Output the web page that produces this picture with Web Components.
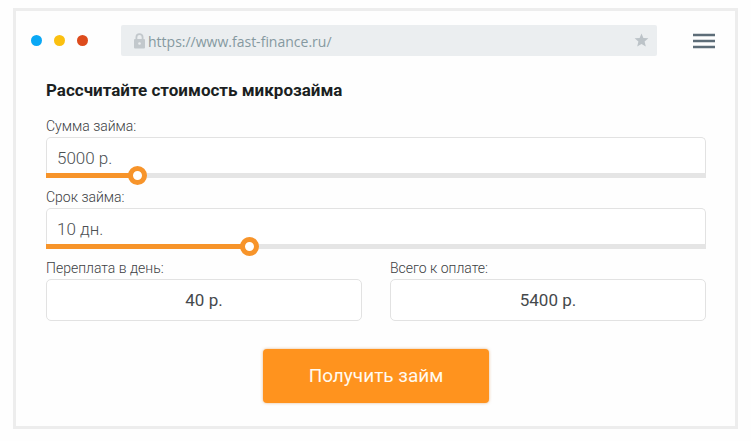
<!DOCTYPE html>
<html lang="ru">
<head>
<meta charset="utf-8">
<meta name="viewport" content="width=device-width, initial-scale=1">
<title>Fast Finance</title>
<style>
body { margin: 0; padding: 8px 13px 12px; background: #fefefe; font-family: Roboto, "Liberation Sans", sans-serif; color: #3c4043; }
</style>
</head>
<body>
<browser-window url="https://www.fast-finance.ru/">
  <loan-calculator></loan-calculator>
</browser-window>

<template id="window-template">
  <style>
    :host { display: block; border: 3px solid #ededed; background: #fefefe; }
    header { display: flex; align-items: center; padding: 14px 20px 0 15px; }
    .dots { display: flex; gap: 12px; flex: none; }
    .dots i { width: 11px; height: 11px; border-radius: 50%; }
    .dots i:nth-child(1) { background: #0aa8f5; }
    .dots i:nth-child(2) { background: #fbc010; }
    .dots i:nth-child(3) { background: #dd4b1c; }
    .address { display: flex; align-items: center; flex: 1; min-width: 0; height: 31px; margin-left: 33px; padding: 0 8px 0 12px; box-sizing: border-box; border-radius: 2px; background: #ebeef0; }
    .address input { flex: 1; min-width: 0; height: 31px; padding: 2px 0 0 2px; border: 0; box-sizing: border-box; background: none; color: #8599a0; font: 14px/20px "Open Sans", "Noto Sans", sans-serif; outline: none; }
    svg { display: block; flex: none; }
    button { padding: 0; border: 0; background: none; cursor: pointer; }
    .menu { margin-left: 36px; }
  </style>
  <header>
    <div class="dots"><i></i><i></i><i></i></div>
    <div class="address">
      <svg width="13" height="16" viewBox="0 0 13 16" aria-hidden="true"><path d="M3.4 7V4.2a3.1 3.1 0 0 1 6.2 0V7" fill="none" stroke="#c2c8cc" stroke-width="1.8"/><rect x="1" y="6" width="11" height="9.5" rx="1" fill="#c2c8cc"/><circle cx="6.5" cy="10.5" r="1.3" fill="#ebeef0"/></svg>
      <input type="text" aria-label="Адрес" spellcheck="false">
      <button type="button" aria-label="В закладки"><svg width="15" height="15" viewBox="0 0 15 15"><path d="M7.5 .4 9.4 5 14.4 5.3 10.6 8.6 11.8 13.6 7.5 10.9 3.2 13.6 4.4 8.6 .6 5.3 5.6 5Z" fill="#bcc3c8"/></svg></button>
    </div>
    <button type="button" class="menu" aria-label="Меню"><svg width="22" height="16" viewBox="0 0 22 16"><path d="M0 2h22M0 8h22M0 14h22" stroke="#5d6d78" stroke-width="2.4"/></svg></button>
  </header>
  <slot></slot>
</template>

<template id="slider-template">
  <style>
    :host { display: block; }
    label { display: block; font-size: 14px; line-height: 22px; font-weight: 300; }
    .box { display: grid; height: 41px; grid-template-rows: 36px 5px; }
    input { font: inherit; color: inherit; margin: 0; box-sizing: border-box; width: 100%; min-width: 0; }
    input[type=text] { height: 36px; padding: 4px 10px 0; border: 1px solid #e2e2e2; border-bottom: 0; border-radius: 5px 5px 0 0; background: #fff; font-size: 17px; font-weight: 300; outline: none; color: #4c5053; }
    input[type=range] { -webkit-appearance: none; appearance: none; height: 19px; align-self: center; background: none; cursor: pointer; }
    input[type=range]::-webkit-slider-runnable-track { height: 5px; background: linear-gradient(to right, #f7942a var(--fill), #e5e5e5 var(--fill)); }
    input[type=range]::-webkit-slider-thumb { -webkit-appearance: none; width: 19px; height: 19px; margin-top: -7px; box-sizing: border-box; border: 5px solid #f7942a; border-radius: 50%; background: #fff; }
  </style>
  <label for="value"></label>
  <div class="box">
    <input type="text" id="value" readonly>
    <input type="range">
  </div>
</template>

<template id="result-template">
  <style>
    :host { display: block; flex: 1; min-width: 0; }
    label { display: block; font-size: 14px; line-height: 22px; font-weight: 300; }
    output { display: block; box-sizing: border-box; padding: 10px; border: 1px solid #e2e2e2; border-radius: 5px; background: #fff; text-align: center; font-size: 17px; line-height: 20px; color: #45494c; }
  </style>
  <label for="sum"></label>
  <output id="sum"><slot></slot></output>
</template>

<template id="calculator-template">
  <style>
    :host { display: block; padding: 22px 29px 23px 30px; }
    h1 { margin: 0 0 13px; font-size: 17px; line-height: 24px; font-weight: 700; color: #1b1f22; }
    form { display: flex; flex-direction: column; gap: 8px; }
    .results { display: flex; gap: 28px; }
    button { align-self: center; margin-top: 20px; padding: 15px 46px; border: 0; border-radius: 4px; background: #ff931e; box-shadow: 0 0 3px rgba(200, 110, 20, .5); color: #fffaf0; font: 19px/24px Roboto, "Liberation Sans", sans-serif; cursor: pointer; }
  </style>
  <h1>Рассчитайте стоимость микрозайма</h1>
  <form>
    <slider-field id="amount" label="Сумма займа:" unit="р." min="0" max="39000" step="500" value="5000"></slider-field>
    <slider-field id="term" label="Срок займа:" unit="дн." min="0" max="33" step="1" value="10"></slider-field>
    <div class="results">
      <result-field id="daily" label="Переплата в день:">40 р.</result-field>
      <result-field id="total" label="Всего к оплате:">5400 р.</result-field>
    </div>
    <button type="button">Получить займ</button>
  </form>
</template>

<script>
function mount(host, id) {
  const root = host.attachShadow({ mode: "open" });
  root.append(document.getElementById(id).content.cloneNode(true));
  return root;
}

customElements.define("browser-window", class extends HTMLElement {
  connectedCallback() {
    if (this.shadowRoot) return;
    mount(this, "window-template").querySelector("input").value = this.getAttribute("url");
  }
});

customElements.define("slider-field", class extends HTMLElement {
  connectedCallback() {
    if (this.shadowRoot) return;
    const root = mount(this, "slider-template");
    const label = this.getAttribute("label");
    root.querySelector("label").textContent = label;
    this.text = root.querySelector("input[type=text]");
    this.range = root.querySelector("input[type=range]");
    this.range.setAttribute("aria-label", label);
    for (const name of ["min", "max", "step", "value"]) this.range[name] = this.getAttribute(name);
    this.range.addEventListener("input", () => {
      this.update();
      this.dispatchEvent(new Event("change"));
    });
    this.update();
  }
  get value() { return Number(this.range.value); }
  update() {
    this.text.value = this.value + " " + this.getAttribute("unit");
    this.range.style.setProperty("--fill", this.value / Number(this.range.max) * 100 + "%");
  }
});

customElements.define("result-field", class extends HTMLElement {
  connectedCallback() {
    if (this.shadowRoot) return;
    mount(this, "result-template").querySelector("label").textContent = this.getAttribute("label");
  }
});

customElements.define("loan-calculator", class extends HTMLElement {
  connectedCallback() {
    if (this.shadowRoot) return;
    const root = mount(this, "calculator-template");
    const find = id => root.getElementById(id);
    const update = () => {
      const daily = find("amount").value * 8 / 1000;
      find("daily").textContent = daily + " р.";
      find("total").textContent = find("amount").value + daily * find("term").value + " р.";
    };
    find("amount").addEventListener("change", update);
    find("term").addEventListener("change", update);
  }
});
</script>
</body>
</html>
